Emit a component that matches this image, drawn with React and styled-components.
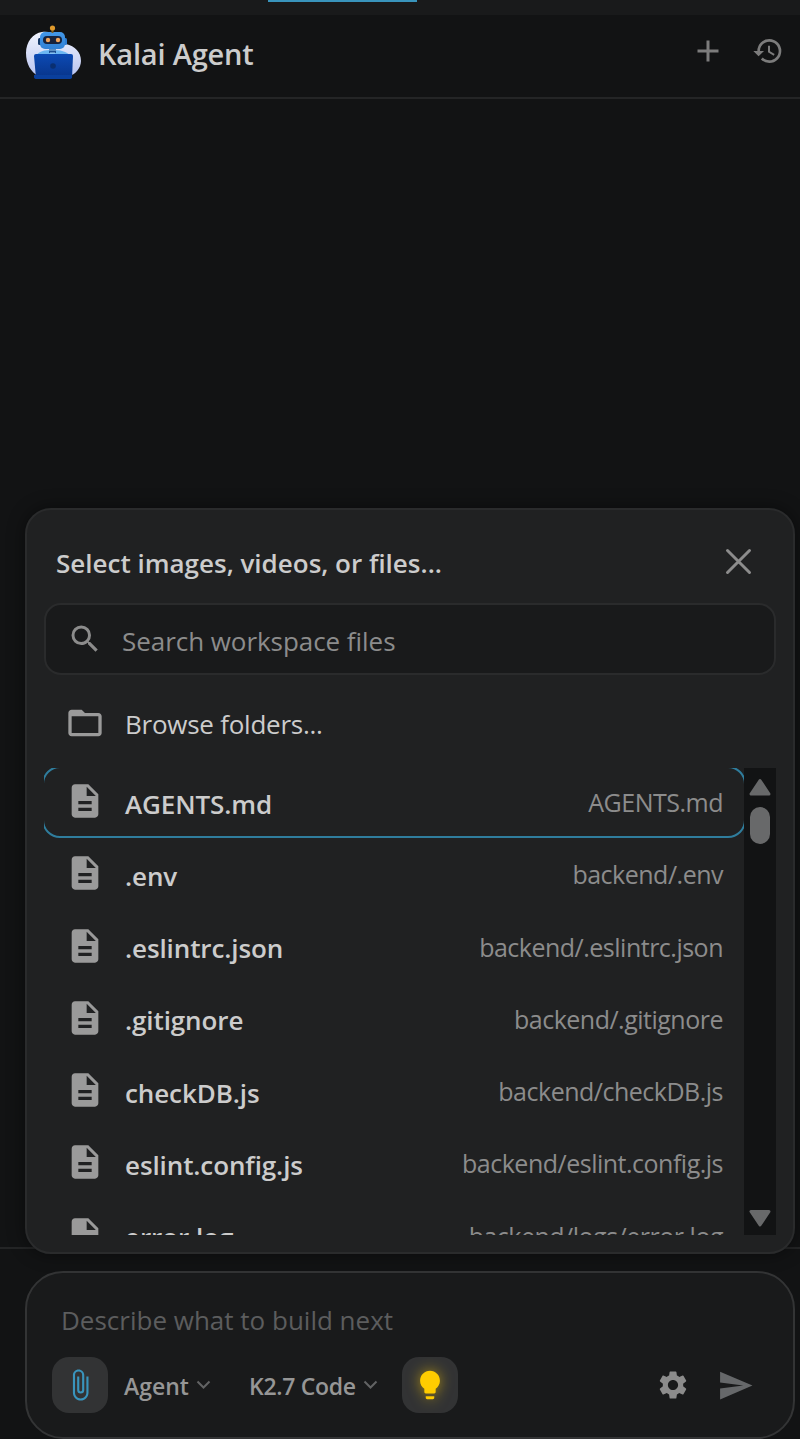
import styled, { createGlobalStyle, css } from 'styled-components';
import {
  MdAdd,
  MdHistory,
  MdSearch,
  MdFolderOpen,
  MdDescription,
  MdAttachFile,
  MdLightbulb,
  MdSettings,
  MdSend,
} from 'react-icons/md';

const colors = {
  editor: '#121314',
  surface: '#191a1b',
  popup: '#202122',
  border: '#2a2b2c',
  inputBorder: '#333435',
  text: '#cccccc',
  muted: '#8c8c8c',
  faint: '#5c5d5e',
  accent: '#3994bc',
};

const GlobalStyle = createGlobalStyle`
  * {
    box-sizing: border-box;
  }

  body {
    margin: 0;
    background: ${colors.editor};
    color: ${colors.text};
    font-family: 'Open Sans', 'Noto Sans', sans-serif;
    overflow: hidden;
  }
`;

const Page = styled.div`
  display: flex;
  flex-direction: column;
  height: 1439px;
`;

const TabStrip = styled.div`
  flex: none;
  height: 15px;
  padding-left: 268px;
  background: ${colors.surface};
`;

const ActiveTabLine = styled.div`
  width: 149px;
  height: 2px;
  background: ${colors.accent};
`;

const Header = styled.header`
  flex: none;
  display: flex;
  align-items: center;
  height: 84px;
  padding: 0 16px 6px 25px;
  border-bottom: 2px solid #242526;
`;

const Title = styled.h1`
  flex: 1;
  margin: 2px 0 0 16px;
  font-size: 29px;
  font-weight: 600;
  line-height: 40px;
  letter-spacing: ${(props) => props.$tracking}px;
`;

const HeaderActions = styled.div`
  display: flex;
  align-items: center;
  gap: 26px;
  margin-top: -4px;
  color: #7c7c7c;
`;

const Messages = styled.main`
  flex: 1;
`;

const Footer = styled.footer`
  flex: none;
  height: 192px;
  padding: 22px 5px 0 25px;
  border-top: 2px solid #242526;
`;

const Composer = styled.div`
  position: relative;
  height: 168px;
  padding: 28px 24px 0 25px;
  border: 2px solid ${colors.inputBorder};
  border-radius: 38px;
  background: ${colors.surface};
`;

const Prompt = styled.div`
  height: 40px;
  padding-left: 9px;
  color: ${colors.faint};
  font-size: 26px;
  line-height: 39px;
  letter-spacing: ${(props) => props.$tracking}px;
`;

const Toolbar = styled.div`
  display: flex;
  align-items: center;
  height: 56px;
  margin-top: 16px;
`;

const ToggleButton = styled.div`
  display: flex;
  align-items: center;
  justify-content: center;
  width: 56px;
  height: 56px;
  border-radius: 17px;
  background: #323334;
  color: ${(props) => props.$color};

  ${(props) =>
    props.$glow &&
    css`
      svg {
        filter: drop-shadow(0 0 7px rgba(255, 204, 0, 0.6));
      }
    `}
`;

const Picker = styled.div`
  display: flex;
  align-items: center;
  gap: 7px;
  width: ${(props) => props.$width}px;
  margin-left: 16px;
  color: #969696;
  font-size: 23px;
  font-weight: 600;
  line-height: 32px;
  letter-spacing: ${(props) => props.$tracking}px;
  white-space: nowrap;

  span {
    padding-top: 2px;
  }
`;

const ToolbarEnd = styled.div`
  display: flex;
  align-items: center;
  gap: 27px;
  margin-left: auto;
  padding-right: 15px;
`;

const Popup = styled.section`
  position: absolute;
  left: -2px;
  right: -2px;
  bottom: calc(100% + 19px);
  height: 746px;
  padding: 26px 17px 16px;
  border: 2px solid ${colors.border};
  border-radius: 26px;
  background: ${colors.popup};
  box-shadow: 0 0 18px rgba(0, 0, 0, 0.45);
`;

const PopupHeader = styled.div`
  display: flex;
  align-items: center;
  justify-content: space-between;
  height: 54px;
  padding: 0 24px 0 12px;

  svg {
    margin-top: -3px;
  }
`;

const PopupTitle = styled.div`
  font-size: 26px;
  font-weight: 600;
  letter-spacing: ${(props) => props.$tracking}px;
`;

const SearchBox = styled.div`
  display: flex;
  align-items: center;
  gap: 19px;
  height: 72px;
  margin-top: 13px;
  padding-left: 21px;
  border: 2px solid ${colors.border};
  border-radius: 17px;
  background: ${colors.surface};
  color: ${colors.muted};
  font-size: 26px;
  letter-spacing: ${(props) => props.$tracking}px;

  span {
    padding-top: 4px;
  }
`;

const BrowseRow = styled.div`
  display: flex;
  align-items: center;
  gap: 20px;
  height: 93px;
  padding: 3px 0 0 21px;
  font-size: 26px;
  letter-spacing: ${(props) => props.$tracking}px;

  svg {
    color: #9a9a9a;
  }

  span {
    padding-top: 2px;
  }
`;

const FileArea = styled.div`
  display: flex;
  height: 467px;
`;

const FileList = styled.div`
  flex: 1;
  display: flex;
  flex-direction: column;
  gap: 4.3px;
  overflow: hidden;
`;

const FileRow = styled.div`
  flex: none;
  display: flex;
  align-items: center;
  height: 68px;
  padding: 0 21px;
  border-radius: 16px;
  outline: ${(props) => (props.$active ? '2px solid #2f7d9d' : 'none')};

  svg {
    flex: none;
    margin-top: -2px;
    color: #9a9a9a;
  }
`;

const FileName = styled.span`
  margin-left: 20px;
  padding-top: 3px;
  font-size: 26px;
  font-weight: 600;
  letter-spacing: ${(props) => props.$tracking}px;
`;

const FilePath = styled.span`
  margin-left: auto;
  color: ${colors.muted};
  font-size: 25px;
  letter-spacing: ${(props) => props.$tracking}px;
`;

const Scrollbar = styled.div`
  display: flex;
  flex-direction: column;
  align-items: center;
  width: 32px;
  padding: 10px 0 7px;
  background: ${colors.editor};
`;

const Thumb = styled.div`
  width: 20px;
  height: 37px;
  margin: 10px 0 auto;
  border-radius: 10px;
  background: #68696a;
`;

const files = [
  { name: 'AGENTS.md', path: 'AGENTS.md', active: true },
  { name: '.env', path: 'backend/.env' },
  { name: '.eslintrc.json', path: 'backend/.eslintrc.json' },
  { name: '.gitignore', path: 'backend/.gitignore' },
  { name: 'checkDB.js', path: 'backend/checkDB.js' },
  { name: 'eslint.config.js', path: 'backend/eslint.config.js' },
  { name: 'error.log', path: 'backend/logs/error.log' },
];

const RobotLogo = () => (
  <svg width="57" height="56" viewBox="0 0 57 56">
    <defs>
      <linearGradient id="cloud" x1="0" y1="0" x2="0" y2="1">
        <stop offset="0" stopColor="#f1f4fe" />
        <stop offset="1" stopColor="#b9c4f0" />
      </linearGradient>
      <linearGradient id="head" x1="0" y1="0" x2="0" y2="1">
        <stop offset="0" stopColor="#4398e8" />
        <stop offset="1" stopColor="#3182d6" />
      </linearGradient>
      <linearGradient id="laptop" x1="0" y1="0" x2="0" y2="1">
        <stop offset="0" stopColor="#0c4ab4" />
        <stop offset="1" stopColor="#083489" />
      </linearGradient>
    </defs>
    <path
      d="M17 7C8 8 1 17 1 28c0 11 5 19 12 23h31c6-1 12-8 12-15 0-9-6-15-15-17C38 11 28 6 17 7z"
      fill="url(#cloud)"
    />
    <path d="M11 31c3-5 8-6 16-6s15 1 18 6z" fill="#6bb6f2" />
    <rect x="24" y="21" width="7" height="7" fill="#1d4f91" />
    <path d="M24 25h7M25 28h5" stroke="#9bd0f7" strokeWidth="1" />
    <rect x="13" y="13" width="4" height="7" rx="1.5" fill="#163a6b" />
    <rect x="38" y="13" width="4" height="7" rx="1.5" fill="#2d7dd3" />
    <rect x="15" y="7" width="25" height="17" rx="5" fill="url(#head)" />
    <rect x="18" y="11" width="19" height="8" rx="4" fill="#17233c" />
    <circle cx="23" cy="15" r="2.2" fill="#f0a45c" />
    <circle cx="33" cy="15" r="2.2" fill="#f0a45c" />
    <path d="M27.500 8V4" stroke="#7a5a20" strokeWidth="2" />
    <circle cx="27.500" cy="3" r="2.600" fill="#e09a2c" />
    <path d="M9 31q0-2 2-2h35q2 0 2 2l-1 22H11z" fill="url(#laptop)" />
    <path d="M9 50h38v2q0 2-2 2H12q-3 0-3-2z" fill="#0a3f9c" />
    <circle cx="28" cy="41" r="2.800" fill="#0a2f70" />
  </svg>
);

const CloseIcon = () => (
  <svg width="27" height="27" viewBox="0 0 27 27" stroke="#8c8c8c" strokeWidth="3">
    <path d="M2.500 2.500l22 22M24.500 2.500l-22 22" strokeLinecap="round" />
  </svg>
);

const ChevronIcon = () => (
  <svg width="15" height="10" viewBox="0 0 15 10" fill="none" stroke="#626364" strokeWidth="2">
    <path d="M1.500 1.500l6 6 6-6" />
  </svg>
);

const ScrollArrow = ({ down }) => (
  <svg width="24" height="19" viewBox="0 0 24 19" fill="#68696a" stroke="#68696a" strokeWidth="3">
    <path d={down ? 'M3 2.500h18L12 16z' : 'M3 16h18L12 2.500z'} strokeLinejoin="round" />
  </svg>
);

const FilePicker = () => (
  <Popup>
    <PopupHeader>
      <PopupTitle $tracking={0}>Select images, videos, or files...</PopupTitle>
      <CloseIcon />
    </PopupHeader>
    <SearchBox $tracking={-0.05}>
      <MdSearch size={36} />
      <span>Search workspace files</span>
    </SearchBox>
    <BrowseRow $tracking={-0.25}>
      <MdFolderOpen size={40} />
      <span>Browse folders...</span>
    </BrowseRow>
    <FileArea>
      <FileList>
        {files.map((file) => (
          <FileRow key={file.path} $active={file.active}>
            <MdDescription size={40} />
            <FileName $tracking={-0.1}>{file.name}</FileName>
            <FilePath $tracking={-0.5}>{file.path}</FilePath>
          </FileRow>
        ))}
      </FileList>
      <Scrollbar>
        <ScrollArrow />
        <Thumb />
        <ScrollArrow down />
      </Scrollbar>
    </FileArea>
  </Popup>
);

const App = () => (
  <>
    <GlobalStyle />
    <Page>
      <TabStrip>
        <ActiveTabLine />
      </TabStrip>
      <Header>
        <RobotLogo />
        <Title $tracking={-0.2}>Kalai Agent</Title>
        <HeaderActions>
          <MdAdd size={36} />
          <MdHistory size={32} />
        </HeaderActions>
      </Header>
      <Messages />
      <Footer>
        <Composer>
          <FilePicker />
          <Prompt $tracking={0}>Describe what to build next</Prompt>
          <Toolbar>
            <ToggleButton $color={colors.accent}>
              <MdAttachFile size={34} />
            </ToggleButton>
            <Picker $width={109} $tracking={0}>
              <span>Agent</span>
              <ChevronIcon />
            </Picker>
            <Picker $width={153} $tracking={-0.3}>
              <span>K2.7 Code</span>
              <ChevronIcon />
            </Picker>
            <ToggleButton $color="#ffcc00" $glow>
              <MdLightbulb size={34} />
            </ToggleButton>
            <ToolbarEnd>
              <MdSettings size={34} color="#8c8c8c" />
              <MdSend size={37} color="#66686a" />
            </ToolbarEnd>
          </Toolbar>
        </Composer>
      </Footer>
    </Page>
  </>
);

export default App;
